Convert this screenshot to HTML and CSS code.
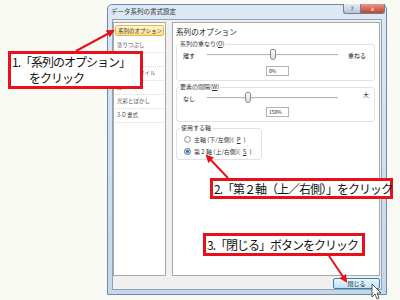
FILE: index.html
```html
<!DOCTYPE html>
<html lang="ja">
<head>
    <meta charset="UTF-8">
    <title>データ系列の書式設定</title>
    <link rel="stylesheet" href="styles.css">
</head>
<body>
    <div class="desktop">
        <div class="window">
            <div class="titlebar">
                <span class="title">データ系列の書式設定</span>
                <div class="caption-btns">
                    <span class="btn-help">?</span>
                    <span class="btn-x">x</span>
                </div>
            </div>
            <div class="client">
                <div class="main">
                    <ul class="nav">
                        <li class="active">系列のオプション</li>
                        <li>塗りつぶし</li>
                        <li>枠線の色</li>
                        <li>枠線のスタイル</li>
                        <li>影</li>
                        <li>光彩とぼかし</li>
                        <li>3-D 書式</li>
                    </ul>
                    <div class="panel">
                        <h1>系列のオプション</h1>

                        <fieldset class="group">
                            <legend>系列の重なり(<u>O</u>)</legend>
                            <div class="slider-row">
                                <span class="lbl-min">離す</span>
                                <div class="track"><span class="thumb" style="left: 50%"></span></div>
                                <span class="lbl-max">重ねる</span>
                            </div>
                            <div class="value-box">0%</div>
                        </fieldset>

                        <fieldset class="group">
                            <legend>要素の間隔(<u>W</u>)</legend>
                            <div class="slider-row">
                                <span class="lbl-min">なし</span>
                                <div class="track"><span class="thumb" style="left: 31%"></span></div>
                                <span class="lbl-max up">大</span>
                            </div>
                            <div class="value-box">150%</div>
                        </fieldset>

                        <fieldset class="group axis">
                            <legend>使用する軸</legend>
                            <div class="radio-row"><span class="radio"></span>主軸 (下/左側)(<u>P</u>)</div>
                            <div class="radio-row"><span class="radio checked"></span>第 2 軸 (上/右側)(<u>S</u>)</div>
                        </fieldset>
                    </div>
                </div>
                <div class="footer">
                    <button class="btn-close">閉じる</button>
                </div>
            </div>
        </div>

        <svg class="arrows" width="400" height="300" viewBox="0 0 400 300">
            <defs>
                <marker id="head" markerWidth="8" markerHeight="8" refX="6" refY="4" orient="auto" markerUnits="userSpaceOnUse">
                    <path d="M0,0 L8,4 L0,8 Z" fill="#e8101a"/>
                </marker>
            </defs>
            <line x1="76" y1="51" x2="113" y2="31" stroke="#e8101a" stroke-width="2" marker-end="url(#head)"/>
            <line x1="228" y1="178" x2="207" y2="156" stroke="#e8101a" stroke-width="2" marker-end="url(#head)"/>
            <line x1="329" y1="256" x2="346" y2="281" stroke="#e8101a" stroke-width="2" marker-end="url(#head)"/>
            <path d="M372,284 L372,297 L375,294 L377,299 L379,298 L377,293 L381,293 Z" fill="#fff" stroke="#333" stroke-width="0.8"/>
        </svg>

        <div class="callout c1">
            <div>1.「系列のオプション」</div>
            <div class="indent">をクリック</div>
        </div>
        <div class="callout c2">2.「第２軸（上／右側）」をクリック</div>
        <div class="callout c3">3.「閉じる」ボタンをクリック</div>
    </div>
</body>
</html>
```

FILE: styles.css
```css
* {
    margin: 0;
    padding: 0;
    box-sizing: border-box;
}

body {
    background: #fafaf4;
    font-family: "Noto Sans CJK JP", "DejaVu Sans", sans-serif;
    color: #222;
    overflow: hidden;
}

.desktop {
    position: relative;
    width: 400px;
    height: 300px;
}

/* dialog window */
.window {
    position: absolute;
    left: 107px;
    top: 4px;
    width: 280px;
    height: 291px;
    border: 1px solid #6f8aa8;
    border-radius: 5px 5px 0 0;
    background: linear-gradient(#dde8f4, #c6d7ea);
    padding: 0 4px 4px 4px;
    display: flex;
    flex-direction: column;
}

.titlebar {
    height: 14px;
    display: flex;
    align-items: flex-start;
}

.title {
    flex: 1;
    font-size: 6.5px;
    line-height: 10px;
    margin-top: 1px;
    margin-left: -1px;
    color: #333;
}

.caption-btns {
    display: flex;
    margin-top: -1px;
    margin-right: -3px;
}

.btn-help, .btn-x {
    height: 10px;
    font-size: 6px;
    line-height: 9px;
    text-align: center;
    font-family: "DejaVu Sans", sans-serif;
    border: 1px solid #6f8094;
    border-top: none;
}

.btn-help {
    width: 17px;
    background: linear-gradient(#e3ebf3, #b6c6d8);
    color: #444;
    border-radius: 0 0 0 3px;
    border-right: none;
}

.btn-x {
    width: 25px;
    background: linear-gradient(#e59a8c, #c3402e);
    color: #fff;
    border-radius: 0 0 3px 0;
}

.client {
    flex: 1;
    background: #f0f0f0;
    border: 1px solid #8fa3b8;
    padding: 2px 1px 0 0;
    display: flex;
    flex-direction: column;
}

.main {
    height: 254px;
    display: flex;
    gap: 6px;
}

/* left navigation */
.nav {
    list-style: none;
    width: 53px;
    background: #fff;
    border: 1px solid #a8a8a8;
    padding: 2px 1px;
}

.nav li {
    height: 14px;
    font-size: 5.5px;
    line-height: 10px;
    padding: 1px 2px 0;
    color: #555;
    border-bottom: 1px dotted #d8d8d8;
    white-space: nowrap;
}

.nav li.active {
    height: 11px;
    margin-bottom: 3px;
    padding-top: 0;
    background: linear-gradient(#fff5cf, #fddf8a);
    border: 1px solid #e8b54c;
    border-radius: 2px;
    color: #333;
}

/* right panel */
.panel {
    flex: 1;
    background: #fff;
    border: 1px solid #a8a8a8;
    padding: 3px 4px 0 3px;
}

h1 {
    font-size: 7.6px;
    font-weight: normal;
    line-height: 12px;
    color: #222;
}

.group {
    border: 1px solid #dde3e8;
    border-radius: 3px;
    padding: 0 4px 4px 6px;
    margin-top: 1px;
}

.group legend {
    font-size: 6px;
    line-height: 10px;
    padding: 0 1px;
    margin-left: -4px;
    color: #333;
}

.slider-row {
    height: 12px;
    display: flex;
    align-items: center;
    font-size: 6px;
    white-space: nowrap;
}

.lbl-min {
    width: 24px;
}

.lbl-max {
    width: 32px;
    padding-left: 10px;
}

.lbl-max.up {
    margin-top: -7px;
    padding-left: 25px;
}

.track {
    flex: 1;
    height: 2px;
    border-top: 1px solid #b4b4b4;
    border-bottom: 1px solid #f4f4f4;
    position: relative;
}

.thumb {
    position: absolute;
    top: -6px;
    width: 6px;
    height: 11px;
    margin-left: -3px;
    background: linear-gradient(#fdfdfd, #dcdcdc);
    border: 1px solid #8d8d8d;
    border-radius: 2px 2px 3px 3px;
}

.value-box {
    width: 23px;
    height: 10px;
    margin: 5px 0 0 83px;
    border: 1px solid #b3b3b3;
    font-size: 5px;
    line-height: 8px;
    padding-left: 2px;
    background: #fff;
}

.group + .group .value-box {
    margin-top: 3px;
}

.axis {
    width: 86px;
    padding: 0 4px 2px 7px;
}

.radio-row {
    height: 12px;
    display: flex;
    align-items: center;
    gap: 3px;
    font-size: 6px;
    color: #333;
    white-space: nowrap;
}

.radio {
    width: 7px;
    height: 7px;
    border-radius: 50%;
    border: 1px solid #9a9a9a;
    background: radial-gradient(#fff, #e2e2e2);
}

.radio.checked {
    border-color: #3f6f98;
    background: radial-gradient(#2a6fb5 35%, #d6e4f0 45%);
}

.footer {
    flex: 1;
    display: flex;
    justify-content: flex-end;
    align-items: flex-start;
}

.btn-close {
    width: 47px;
    height: 11px;
    margin-top: 2px;
    border: 1px solid #3c7fb1;
    border-radius: 2px;
    background: linear-gradient(#eaf6fd, #bfe0f6);
    font-family: inherit;
    font-size: 6px;
    line-height: 9px;
    color: #222;
}

/* annotations */
.arrows {
    position: absolute;
    left: 0;
    top: 0;
    pointer-events: none;
}

.callout {
    position: absolute;
    background: #fff;
    border: 3px solid #e8101a;
    font-size: 12px;
    letter-spacing: -1px;
    line-height: 16px;
    color: #111;
    padding-left: 1px;
    white-space: nowrap;
}

.c1 {
    left: 8px;
    top: 51px;
    width: 135px;
    height: 38px;
}

.c1 .indent {
    padding-left: 17px;
}

.c2 {
    left: 210px;
    top: 178px;
    width: 183px;
    height: 21px;
    line-height: 15px;
}

.c3 {
    left: 203px;
    top: 233px;
    width: 162px;
    height: 23px;
    line-height: 17px;
}
```
